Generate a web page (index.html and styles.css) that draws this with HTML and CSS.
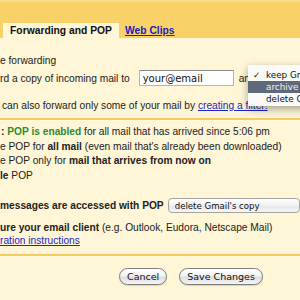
FILE: index.html
```html
<!DOCTYPE html>
<html lang="en">

<head>
  <meta charset="UTF-8" />
  <title>Settings - Forwarding and POP</title>
  <meta name="viewport" content="width=device-width, initial-scale=1.0" />
  <link rel="stylesheet" href="styles.css">
</head>

<body>

  <div class="page">
    <div class="tabs">
      <div class="tab active">Forwarding and POP</div>
      <a class="tab-link" href="#">Web Clips</a>
    </div>

    <div class="content">
      <section class="block forwarding">
        <div class="row">e forwarding</div>
        <div class="row">
          <span>rd a copy of incoming mail to</span>
          <input type="text" class="email" value="your@email" />
          <span>an</span>
        </div>
        <div class="row">can also forward only some of your mail by&nbsp;<a href="#">creating a filter!</a></div>
      </section>

      <section class="block pop">
        <div class="line"><b>:</b> <b class="enabled">POP is enabled</b> for all mail that has arrived since 5:06 pm</div>
        <div class="line">e POP for <b>all mail</b> (even mail that's already been downloaded)</div>
        <div class="line">e POP only for <b>mail that arrives from now on</b></div>
        <div class="line"><b>le</b> POP</div>
      </section>

      <section class="block client">
        <div class="row">
          <b>messages are accessed with POP</b>
          <select class="action">
            <option>delete Gmail's copy</option>
          </select>
        </div>
        <p class="note"><b>ure your email client</b> (e.g. Outlook, Eudora, Netscape Mail)<br>
          <a href="#">ration instructions</a></p>
      </section>

      <div class="actions">
        <button type="button">Cancel</button>
        <button type="button">Save Changes</button>
      </div>
    </div>

    <!-- open dropdown for the forwarding choice -->
    <ul class="menu">
      <li><span class="check">&#10003;</span>keep Gmail's copy in the Inbox</li>
      <li class="hover">archive Gmail's copy</li>
      <li>delete Gmail's copy</li>
    </ul>
  </div>

</body>

</html>
```

FILE: styles.css
```css
* {
  box-sizing: border-box;
}

body {
  margin: 0;
  padding: 0;
  font-family: "Liberation Sans", Arial, sans-serif;
  font-size: 10.2px;
  color: #222;
  background-color: #fef6d6;
  overflow: hidden;
}

.page {
  position: relative;
  width: 300px;
  height: 300px;
  overflow: hidden;
}

.tabs {
  display: flex;
  align-items: flex-end;
  height: 38px;
  padding-left: 3px;
  background-color: #f9d169;
  border-top: 2px solid #fbdc8c;
}

.tab {
  width: 116px;
  height: 15px;
  line-height: 15px;
  text-align: center;
  font-size: 10.3px;
  font-weight: bold;
  white-space: nowrap;
}

.tab.active {
  background-color: #fef6d6;
  color: #111;
}

.tab-link {
  margin-left: 6px;
  line-height: 15px;
  font-size: 10.3px;
  font-weight: bold;
  color: #1d1db8;
  white-space: nowrap;
}

.block {
  border-bottom: 2px solid #f6cb5e;
  white-space: nowrap;
}

.row {
  display: flex;
  align-items: center;
  height: 15px;
  white-space: nowrap;
}

a {
  color: #2424c8;
}

.forwarding {
  padding: 15px 0 5px 0;
}

.forwarding .row:nth-child(2) {
  height: 16px;
  margin-top: 2px;
}

.forwarding .row:nth-child(3) {
  margin-top: 12px;
  padding-left: 2px;
}

.email {
  width: 95px;
  height: 16px;
  margin: 0 5px 0 9px;
  padding: 0 3px;
  font-family: "DejaVu Sans", sans-serif;
  font-size: 10px;
  color: #111;
  background-color: #fff;
  border: 1px solid #b5b5b5;
  border-top-color: #8c8c8c;
  border-radius: 0;
}

.pop {
  padding: 5px 0 0 0;
  border-bottom: none;
}

.line {
  line-height: 14.5px;
}

.line:first-child {
  padding-left: 1px;
}

.enabled {
  color: #2e8b2e;
}

.client {
  padding: 15px 0 7px 0;
}

.action {
  appearance: none;
  -webkit-appearance: none;
  width: 150px;
  height: 15px;
  margin-left: 4px;
  padding: 0 6px;
  font-family: "DejaVu Sans", sans-serif;
  font-size: 8.6px;
  color: #111;
  background: linear-gradient(#ffffff, #f1f1f1 50%, #e6e6e6 51%, #f6f6f6);
  border: 1px solid #a4a4a4;
  border-radius: 4px;
}

.note {
  margin: 9px 0 0 0;
  line-height: 12.5px;
}

.actions {
  display: flex;
  gap: 12px;
  padding: 12px 0 0 119px;
}

.actions button {
  height: 17px;
  padding: 0 7px;
  font-family: "DejaVu Sans", sans-serif;
  font-size: 9.5px;
  color: #111;
  background: linear-gradient(#ffffff, #f2f2f2 45%, #dedede 55%, #f5f5f5);
  border: 1px solid #7d7d7d;
  border-radius: 9px;
  box-shadow: 0 1px 1px rgba(0, 0, 0, 0.15);
  cursor: pointer;
}

.menu {
  position: absolute;
  left: 248px;
  top: 65px;
  width: 110px;
  margin: 0;
  padding: 4px 0 1px 0;
  list-style: none;
  font-family: "DejaVu Sans", sans-serif;
  font-size: 8.8px;
  color: #111;
  background-color: rgba(250, 250, 250, 0.97);
  box-shadow: 0 3px 8px rgba(0, 0, 0, 0.35);
  white-space: nowrap;
}

.menu li {
  height: 12px;
  line-height: 12px;
  padding-left: 18px;
  position: relative;
}

.menu li.hover {
  background-color: #5e6a7b;
  color: #eef1f5;
}

.check {
  position: absolute;
  left: 5px;
  top: 0;
}
```
